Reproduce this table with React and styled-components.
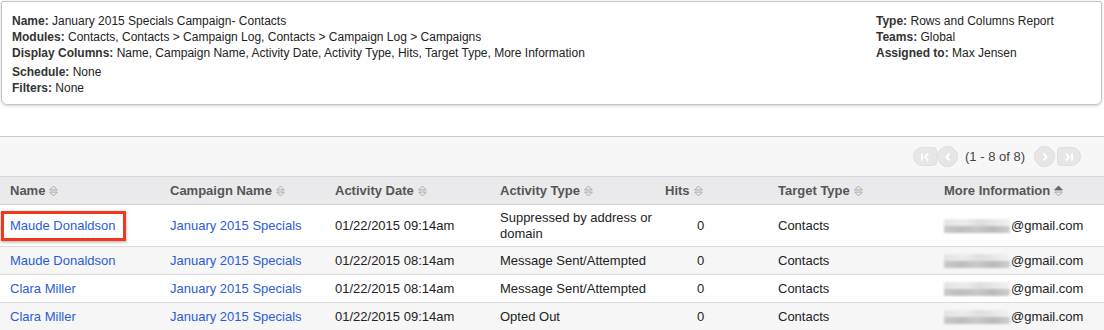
import React from "react";
import styled, { createGlobalStyle } from "styled-components";

const GlobalStyle = createGlobalStyle`
  body {
    margin: 0;
    background: #fff;
    font-family: "Liberation Sans", Arial, sans-serif;
    font-size: 12px;
    color: #222;
  }
`;

const Page = styled.div`
  width: 1104px;
  height: 330px;
  overflow: hidden;
`;

const DetailsPanel = styled.div`
  margin: 1px 2px 0 1px;
  height: 104px;
  box-sizing: border-box;
  border: 1px solid #c4c4c4;
  border-radius: 2px 2px 6px 6px;
  box-shadow: 0 1px 3px rgba(0, 0, 0, 0.18);
  padding: 11px 11px 0 10px;
  display: flex;
  justify-content: space-between;
`;

const DetailCol = styled.div`
  width: ${(p) => p.$width || "auto"};
`;

const Line = styled.div`
  line-height: 16px;
  margin-top: ${(p) => (p.$gap ? "3px" : "0")};
  white-space: nowrap;
  b {
    color: #333;
  }
`;

const ListArea = styled.div`
  margin-top: 31px;
  border-top: 1px solid #c9c9c9;
  background: #f7f7f7;
`;

const PagerRow = styled.div`
  height: 39px;
  display: flex;
  justify-content: flex-end;
  align-items: center;
  padding-right: 23px;
`;

const PagerEnd = styled.span`
  width: 24px;
  height: 19px;
  background: #e7e7e7;
  border: 1px solid #dedede;
  box-sizing: border-box;
  border-radius: ${(p) => (p.$right ? "4px 10px 10px 4px" : "10px 4px 4px 10px")};
  display: flex;
  align-items: center;
  justify-content: center;
`;

const PagerCircle = styled.span`
  width: 21px;
  height: 21px;
  border-radius: 50%;
  background: #e6e6e6;
  border: 1px solid #dcdcdc;
  box-sizing: border-box;
  display: flex;
  align-items: center;
  justify-content: center;
  margin: ${(p) => p.$margin};
`;

const PagerText = styled.span`
  font-size: 13px;
  color: #444;
  margin: 0 9px 0 7px;
`;

const Grid = styled.div`
  display: grid;
  grid-template-columns: 160px 165px 165px 165px 113px 166px 1fr;
`;

const HeaderRow = styled(Grid)`
  height: 27px;
  background: #eaeaec;
  border-top: 1px solid #d8d8d8;
  border-bottom: 1px solid #d2d2d2;
`;

const HeadCell = styled.div`
  display: flex;
  align-items: center;
  padding-left: 10px;
  font-weight: bold;
  color: #555;
  font-size: 13px;
`;

const Row = styled(Grid)`
  min-height: ${(p) => p.$height}px;
  background: ${(p) => (p.$alt ? "#f6f6f6" : "#fff")};
  border-bottom: 1px solid #dadada;
`;

const Cell = styled.div`
  display: flex;
  align-items: center;
  padding: 0 2px 0 ${(p) => p.$indent || 10}px;
  font-size: 13px;
  line-height: 16px;
  color: #222;
`;

const Link = styled.a`
  color: #2b5cd6;
  text-decoration: none;
  font-size: 13px;
`;

const Highlight = styled.span`
  margin-left: -9px;
  padding: 4px 7px 4px 6px;
  border: 3px solid #f2371c;
  box-shadow: 0 1px 3px rgba(0, 0, 0, 0.35);
  line-height: 16px;
`;

const Blur = styled.span`
  display: inline-block;
  width: 66px;
  height: 14px;
  margin-right: 1px;
  background:
    linear-gradient(90deg, #e4e4e4 0%, #ececec 30%, #dedede 55%, #e9e9e9 80%, #f2f2f2 100%) top / 100% 7px no-repeat,
    linear-gradient(90deg, #c9c9c9 0%, #bdbdbd 25%, #c8c8c8 50%, #b9b9b9 75%, #cfcfcf 100%) bottom / 100% 7px no-repeat;
  filter: blur(0.8px);
`;

const Sort = ({ active }) => (
  <svg width="11" height="12" viewBox="0 0 10 11" style={{ marginLeft: 3 }}>
    <path
      d="M1.5 4.5 L5 1 L8.5 4.5 Z"
      fill={active ? "#666" : "none"}
      stroke={active ? "#666" : "#a8a8a8"}
      strokeWidth="0.9"
    />
    <path d="M1.5 6.5 L5 10 L8.5 6.5 Z" fill="none" stroke="#a8a8a8" strokeWidth="0.9" />
  </svg>
);

const Chevron = ({ dir = "left", bar }) => (
  <svg width="12" height="12" viewBox="0 0 12 12">
    {dir === "left" ? (
      <>
        {bar && <path d="M3 2.5 V9.5" stroke="#fff" strokeWidth="2" />}
        <path d={bar ? "M9 2.5 L6 6 L9 9.5" : "M7.5 2.5 L4.5 6 L7.5 9.5"} fill="none" stroke="#fff" strokeWidth="2" />
      </>
    ) : (
      <>
        {bar && <path d="M9 2.5 V9.5" stroke="#fff" strokeWidth="2" />}
        <path d={bar ? "M3 2.5 L6 6 L3 9.5" : "M4.5 2.5 L7.5 6 L4.5 9.5"} fill="none" stroke="#fff" strokeWidth="2" />
      </>
    )}
  </svg>
);

const columns = [
  "Name",
  "Campaign Name",
  "Activity Date",
  "Activity Type",
  "Hits",
  "Target Type",
  "More Information",
];

const rows = [
  { name: "Maude Donaldson", date: "01/22/2015 09:14am", type: "Suppressed by address or domain", highlight: true },
  { name: "Maude Donaldson", date: "01/22/2015 08:14am", type: "Message Sent/Attempted" },
  { name: "Clara Miller", date: "01/22/2015 08:14am", type: "Message Sent/Attempted" },
  { name: "Clara Miller", date: "01/22/2015 09:14am", type: "Opted Out" },
];

export default function App() {
  return (
    <Page>
      <GlobalStyle />
      <DetailsPanel>
        <DetailCol>
          <Line><b>Name:</b> January 2015 Specials Campaign- Contacts</Line>
          <Line><b>Modules:</b> Contacts, Contacts &gt; Campaign Log, Contacts &gt; Campaign Log &gt; Campaigns</Line>
          <Line><b>Display Columns:</b> Name, Campaign Name, Activity Date, Activity Type, Hits, Target Type, More Information</Line>
          <Line $gap><b>Schedule:</b> None</Line>
          <Line><b>Filters:</b> None</Line>
        </DetailCol>
        <DetailCol $width="214px">
          <Line><b>Type:</b> Rows and Columns Report</Line>
          <Line><b>Teams:</b> Global</Line>
          <Line><b>Assigned to:</b> Max Jensen</Line>
        </DetailCol>
      </DetailsPanel>

      <ListArea>
        <PagerRow>
          <PagerEnd><Chevron dir="left" bar /></PagerEnd>
          <PagerCircle $margin="0"><Chevron dir="left" /></PagerCircle>
          <PagerText>(1 - 8 of 8)</PagerText>
          <PagerCircle $margin="0 2px 0 0"><Chevron dir="right" /></PagerCircle>
          <PagerEnd $right><Chevron dir="right" bar /></PagerEnd>
        </PagerRow>

        <HeaderRow>
          {columns.map((c) => (
            <HeadCell key={c}>
              {c}
              <Sort active={c === "More Information"} />
            </HeadCell>
          ))}
        </HeaderRow>

        {rows.map((r, i) => (
          <Row key={i} $alt={i % 2 === 1} $height={i === 0 ? 41 : 27}>
            <Cell>
              {r.highlight ? (
                <Highlight><Link href="#">{r.name}</Link></Highlight>
              ) : (
                <Link href="#">{r.name}</Link>
              )}
            </Cell>
            <Cell><Link href="#">January 2015 Specials</Link></Cell>
            <Cell>{r.date}</Cell>
            <Cell>{r.type}</Cell>
            <Cell $indent={42}>0</Cell>
            <Cell>Contacts</Cell>
            <Cell><Blur />@gmail.com</Cell>
          </Row>
        ))}
      </ListArea>
    </Page>
  );
}
